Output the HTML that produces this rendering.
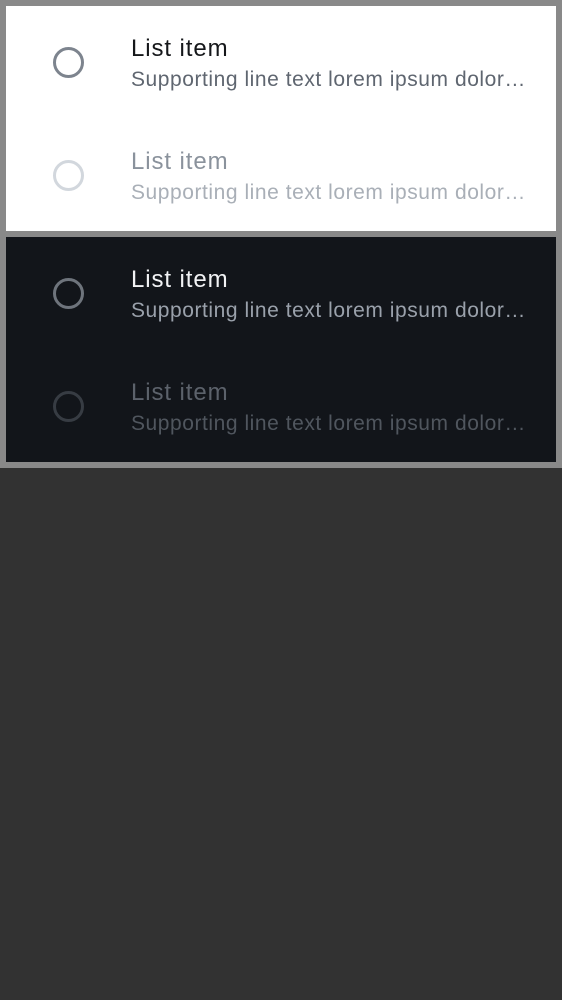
<!DOCTYPE html>
<html><head><meta charset="utf-8"><style>
html,body{margin:0;padding:0;width:562px;height:1000px;background:#323232;overflow:hidden;font-family:"Liberation Sans",sans-serif}
.top{position:absolute;left:0;top:0;width:562px;height:468px;background:#898989}
.panel{position:absolute;left:6px;width:550px;height:225px}
.item{position:absolute;left:0;width:550px;height:113px}
.c{position:absolute;left:47px;width:25px;height:25px;border-radius:50%;border:3px solid}
.t{position:absolute;left:125px;font-size:24px;letter-spacing:0.9px;white-space:nowrap}
.s{position:absolute;left:125px;width:399px;font-size:21px;letter-spacing:0.55px;white-space:nowrap;overflow:hidden;text-overflow:ellipsis}
</style></head><body>
<div class="top"></div>
<div class="panel" style="top:6px;background:#fff">
 <div class="item" style="top:0">
  <div class="c" style="top:41px;border-color:#7d848e"></div>
  <div class="t" style="top:29px;color:#15171a">List item</div>
  <div class="s" style="top:62px;color:#5f6670">Supporting line text lorem ipsum dolor sit amet</div>
 </div>
 <div class="item" style="top:113px">
  <div class="c" style="top:41px;border-color:#d2d7dd"></div>
  <div class="t" style="top:29px;color:#8a929c">List item</div>
  <div class="s" style="top:62px;color:#a9afb7">Supporting line text lorem ipsum dolor sit amet</div>
 </div>
</div>
<div class="panel" style="top:237px;background:#12151a">
 <div class="item" style="top:0">
  <div class="c" style="top:41px;border-color:#6e747c"></div>
  <div class="t" style="top:29px;color:#f2f3f5">List item</div>
  <div class="s" style="top:62px;color:#9aa1ab">Supporting line text lorem ipsum dolor sit amet</div>
 </div>
 <div class="item" style="top:113px">
  <div class="c" style="top:41px;border-color:#373c43"></div>
  <div class="t" style="top:29px;color:#5c626b">List item</div>
  <div class="s" style="top:62px;color:#50565e">Supporting line text lorem ipsum dolor sit amet</div>
 </div>
</div>
</body></html>
